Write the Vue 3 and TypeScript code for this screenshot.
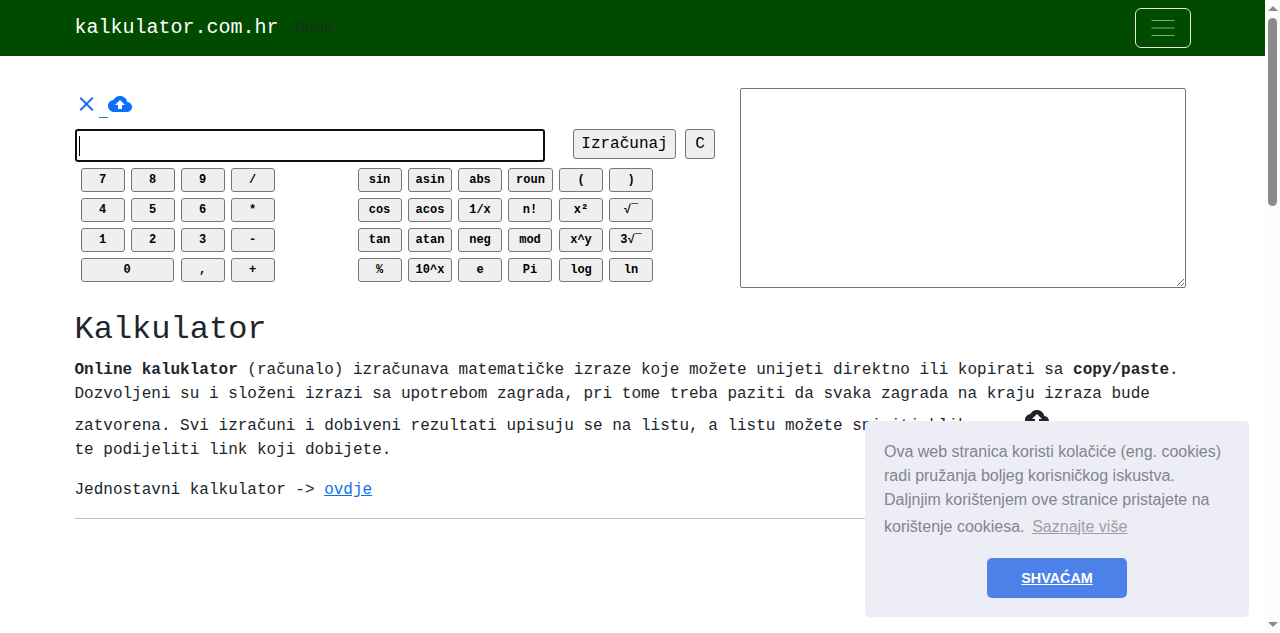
<script setup lang="ts">
import { ref } from 'vue'

const expression = ref('')
const history = ref('')

const numericKeys: string[] = ['7', '8', '9', '/', '4', '5', '6', '*', '1', '2', '3', '-', '0', ',', '+']
const functionKeys: string[] = [
  'sin', 'asin', 'abs', 'roun', '(', ')',
  'cos', 'acos', '1/x', 'n!', 'x²', '√‾',
  'tan', 'atan', 'neg', 'mod', 'x^y', '3√‾',
  '%', '10^x', 'e', 'Pi', 'log', 'ln',
]

function press(key: string) {
  expression.value += key
}

function clearAll() {
  expression.value = ''
}
</script>

<template>
  <div class="page">
    <header class="navbar">
      <div class="nav-inner">
        <a class="brand">kalkulator.com.hr</a>
        <a class="home">Home</a>
        <button class="toggler" aria-label="Menu">
          <svg viewBox="0 0 30 30" width="30" height="30">
            <path d="M3.5 7.5h23M3.5 15h23M3.5 22.5h23" />
          </svg>
        </button>
      </div>
    </header>

    <main class="container">
      <section class="calculator">
        <div class="left">
          <div class="tools">
            <svg class="close" viewBox="0 0 24 24" width="24" height="24"><path d="M19 6.41 17.59 5 12 10.59 6.41 5 5 6.41 10.59 12 5 17.59 6.41 19 12 13.41 17.59 19 19 17.59 13.41 12z" /></svg>
            <span class="link-gap"></span>
            <svg viewBox="0 0 24 24" width="24" height="24"><path d="M19.35 10.04C18.67 6.59 15.64 4 12 4 9.11 4 6.6 5.64 5.35 8.04 2.34 8.36 0 10.91 0 14c0 3.31 2.69 6 6 6h13c2.76 0 5-2.24 5-5 0-2.64-2.05-4.78-4.65-4.96zM14 13v4h-4v-4H7l5-5 5 5h-3z" /></svg>
          </div>
          <div class="entry">
            <div class="field">
              <input v-model="expression" type="text" aria-label="Izraz" />
              <span class="caret"></span>
            </div>
            <button class="action calculate">Izračunaj</button>
            <button class="action clear" @click="clearAll">C</button>
          </div>
          <div class="pads">
            <div class="numbers">
              <button v-for="key in numericKeys" :key="key" class="key" :class="{ zero: key === '0' }" @click="press(key)">{{ key }}</button>
            </div>
            <div class="functions">
              <button v-for="key in functionKeys" :key="key" class="key" :class="{ round: key === 'roun' }" @click="press(key)">{{ key }}</button>
            </div>
          </div>
        </div>
        <textarea v-model="history" aria-label="Lista"></textarea>
      </section>

      <h1>Kalkulator</h1>
      <p class="intro">
        <span class="line"><b>Online kaluklator</b> (računalo) izračunava matematičke izraze koje možete unijeti direktno ili kopirati sa <b>copy/paste</b>.</span>
        <span class="line">Dozvoljeni su i složeni izrazi sa upotrebom zagrada, pri tome treba paziti da svaka zagrada na kraju izraza bude</span>
        <span class="line tall">zatvorena. Svi izračuni i dobiveni rezultati upisuju se na listu, a listu možete snimiti klikom na&nbsp;<svg viewBox="0 0 24 24" width="24" height="24"><path d="M19.35 10.04C18.67 6.59 15.64 4 12 4 9.11 4 6.6 5.64 5.35 8.04 2.34 8.36 0 10.91 0 14c0 3.31 2.69 6 6 6h13c2.76 0 5-2.24 5-5 0-2.64-2.05-4.78-4.65-4.96zM14 13v4h-4v-4H7l5-5 5 5h-3z" /></svg></span>
        <span class="line">te podijeliti link koji dobijete.</span>
      </p>
      <p class="simple">Jednostavni kalkulator -&gt; <a>ovdje</a></p>
      <hr />
    </main>

    <aside class="cookies">
      <p>Ova web stranica koristi kolačiće (eng. cookies)<br />radi pružanja boljeg korisničkog iskustva.<br />Daljnjim korištenjem ove stranice pristajete na<br /><span class="last">korištenje cookiesa. <a>Saznajte više</a></span></p>
      <a class="accept">SHVAĆAM</a>
    </aside>

    <div class="scrollbar">
      <svg viewBox="0 0 10 5" width="10" height="5"><path d="M0 5 5 0 10 5z" /></svg>
      <div class="thumb"></div>
      <svg class="down" viewBox="0 0 10 5" width="10" height="5"><path d="M0 0h10L5 5z" /></svg>
    </div>
  </div>
</template>

<style>
html, body { margin: 0; overflow: hidden; }
</style>

<style scoped>
* { box-sizing: border-box; }
.page {
  position: relative;
  height: 633px;
  overflow: hidden;
  padding-right: 15px;
  background: #fff;
  color: #212529;
  font: 16px/24px "Liberation Mono", monospace;
}
.navbar { height: 56px; background: #004b00; }
.nav-inner {
  display: flex;
  align-items: center;
  width: 1116px;
  height: 56px;
  margin: 0 auto;
}
.brand { color: #fff; font-size: 20px; line-height: 30px; }
.home { margin-left: 16.5px; color: #15301c; }
.toggler {
  display: flex;
  align-items: center;
  justify-content: center;
  width: 56px;
  height: 40px;
  margin-left: auto;
  padding: 0;
  background: transparent;
  border: 1px solid #e0f0e0;
  border-radius: 6px;
}
.toggler path { fill: none; stroke: #b4e6b4; stroke-opacity: .65; stroke-width: 1; }
.container { width: 1116px; margin: 0 auto; padding-top: 32px; }
.calculator { display: flex; height: 200px; }
.left { width: 665.5px; }
.tools { display: flex; height: 41px; padding-top: 4px; fill: #0d6efd; }
.link-gap { width: 9.6px; height: 26px; border-bottom: 1px solid #1a80b4; }
.close { fill: #1a6fe8; }
.close path { transform: translateX(-0.5px); }
.entry { display: flex; height: 33px; }
.field { position: relative; width: 470px; height: 33px; }
.field input {
  width: 100%;
  height: 33px;
  padding: 1px 4px;
  border: 2px solid #101010;
  border-radius: 3px;
  outline: none;
  font: inherit;
  color: #000;
}
.caret { position: absolute; left: 4px; top: 7px; width: 1px; height: 20px; background: #000; }
.action, .key {
  padding: 0;
  background: #efefef;
  color: #000;
  border: 1px solid #767676;
  border-radius: 3px;
  font-family: inherit;
}
.action { height: 30px; font-size: 16px; line-height: 28px; }
.calculate { width: 103px; margin-left: 28px; padding-left: 1px; }
.clear { width: 30px; margin-left: 9px; padding-left: 1px; }
.pads { display: flex; gap: 83px; padding: 6px 0 0 6px; }
.numbers { display: grid; grid-template-columns: repeat(4, 44px); grid-auto-rows: 24px; gap: 6px; }
.functions { display: grid; grid-template-columns: 44px 44px 44px 45px 44px 44px; grid-auto-rows: 24px; gap: 6px; }
.key { width: 44px; font-size: 12px; font-weight: 700; line-height: 20px; white-space: nowrap; overflow: hidden; }
.functions .key:nth-child(6n+2), .functions .key:nth-child(6n+3), .functions .key:nth-child(6n+4), .functions .key:nth-child(6n+5), .functions .key:nth-child(6n) { padding-left: 1px; }
.zero { grid-column: span 2; width: 93px; }
.round { width: 45px; }
textarea {
  width: 446px;
  height: 200px;
  margin: 0;
  border: 1px solid #767676;
  border-radius: 2px;
  outline: none;
  background: #fff;
  font: inherit;
}
h1 { margin: 23px 0 7px; font-size: 32px; font-weight: 400; line-height: 38px; }
p { margin: 0; }
.intro { padding-top: 2px; white-space: nowrap; }
.line { display: block; height: 24px; }
.tall { display: flex; height: 32px; line-height: 40px; }
.tall svg { fill: #212529; }
.simple { margin-top: 16px; }
.simple a { color: #0f70ee; text-decoration: underline; }
hr { height: 1px; margin: 16px 0 0; border: 0; background: #c0c1c2; }
.cookies {
  position: absolute;
  left: 865px;
  top: 421px;
  width: 384px;
  height: 196px;
  padding: 19px;
  border-radius: 5px;
  background: #edeef5;
  color: #838391;
  font: 16px/24px "Liberation Sans", Arial, sans-serif;
  white-space: nowrap;
}
.last { display: block; height: 30px; line-height: 30px; }
.last a { margin-left: 3.2px; color: #9d9da8; text-decoration: underline; }
.accept {
  display: block;
  width: 140px;
  height: 40px;
  margin: 16px auto 0;
  border-radius: 5px;
  background: #4b81e8;
  color: #fff;
  font-size: 14.4px;
  font-weight: 700;
  line-height: 40px;
  text-align: center;
  text-decoration: underline;
}
.scrollbar {
  position: absolute;
  right: 0;
  top: 0;
  display: flex;
  flex-direction: column;
  align-items: center;
  width: 15px;
  height: 633px;
  padding: 6px 0;
  background: #fcfcfc;
  fill: #8b8b8b;
}
.thumb { width: 9px; height: 188px; margin-top: 7px; border-radius: 5px; background: #8b8b8b; }
.down { margin-top: auto; }
</style>
